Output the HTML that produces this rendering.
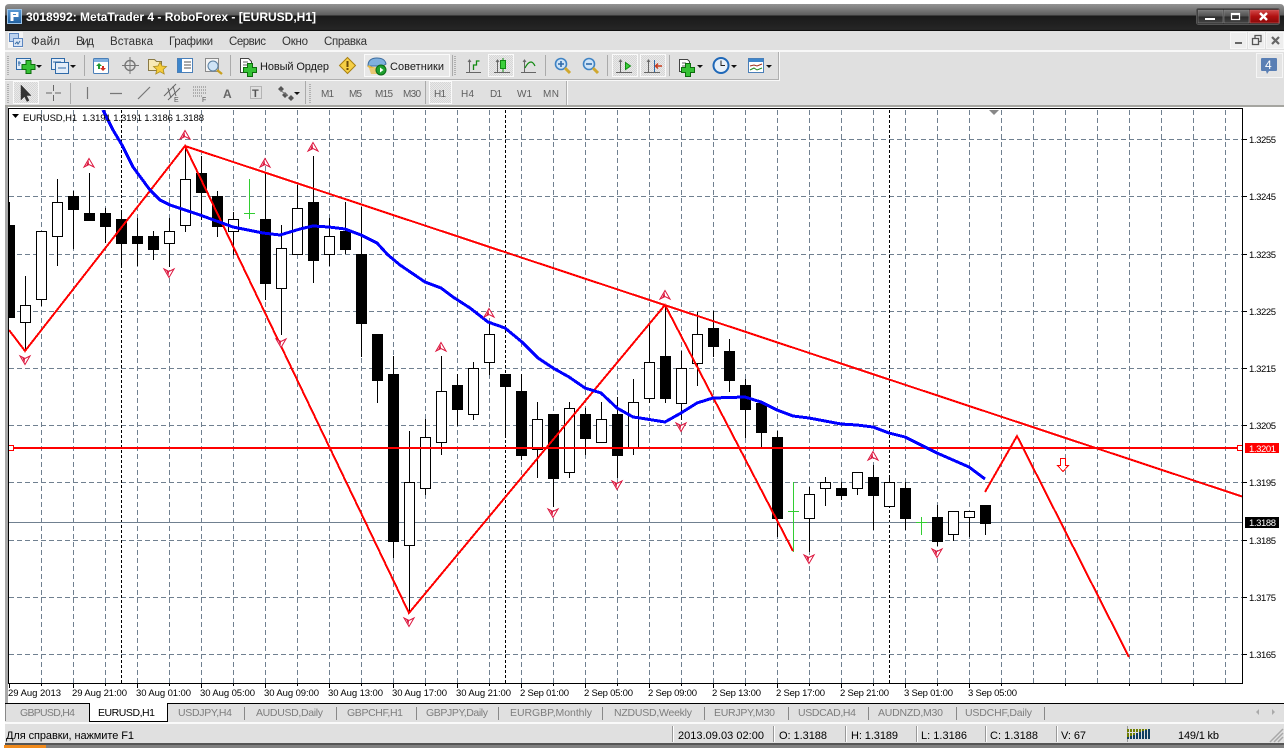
<!DOCTYPE html>
<html><head><meta charset="utf-8"><title>MetaTrader 4</title>
<style>
html,body{margin:0;padding:0;background:#fff;width:1288px;height:748px;overflow:hidden}
svg{display:block;position:absolute;left:0;top:0}
text{font-family:"Liberation Sans","DejaVu Sans",sans-serif;font-size:11px;fill:#1a1a1a;white-space:pre}
.c text,text.c{font-size:9.5px;fill:#000}
.m text{fill:#333;font-size:11.5px}
.t text{fill:#7d7d7d;font-size:10.5px}
.tf text{fill:#5e5e5e;font-size:10px}
</style></head><body>
<svg width="1288" height="748" viewBox="0 0 1288 748" xmlns="http://www.w3.org/2000/svg">
<defs>
<linearGradient id="tb" x1="0" y1="0" x2="0" y2="1"><stop offset="0" stop-color="#949494"/><stop offset=".42" stop-color="#5c5c5c"/><stop offset=".43" stop-color="#191919"/><stop offset=".95" stop-color="#262626"/><stop offset="1" stop-color="#000"/></linearGradient>
<linearGradient id="bt" x1="0" y1="0" x2="0" y2="1"><stop offset="0" stop-color="#7a7a7a"/><stop offset=".5" stop-color="#4e4e4e"/><stop offset=".51" stop-color="#2a2a2a"/><stop offset="1" stop-color="#444"/></linearGradient>
<linearGradient id="rd" x1="0" y1="0" x2="0" y2="1"><stop offset="0" stop-color="#d24a4a"/><stop offset=".5" stop-color="#b01010"/><stop offset="1" stop-color="#8a0a0a"/></linearGradient>
<linearGradient id="bl" x1="0" y1="0" x2="0" y2="1"><stop offset="0" stop-color="#5a9ad6"/><stop offset="1" stop-color="#1f5f9f"/></linearGradient>
<pattern id="chk" width="2" height="2" patternUnits="userSpaceOnUse"><rect width="2" height="2" fill="#e9e9e9"/><rect width="1" height="1" fill="#d6d6d6"/><rect x="1" y="1" width="1" height="1" fill="#d6d6d6"/></pattern>
<g id="plus"><path d="M-2.500-6.500h5v4h4v5h-4v4h-5v-4h-4v-5h4z" fill="#35c135" stroke="#0d6d0d"/></g>
<g id="au"><path d="M0-4.500 5 4 0 1.500-5 4z" fill="#fff" stroke="#dc143c"/><path d="M-.5-3-3 3 0 1z" fill="#dc143c"/></g>
<g id="ad"><path d="M0 4.500 5-4 0-1.500-5-4z" fill="#fff" stroke="#dc143c"/><path d="M-.5 3-3-3 0-1z" fill="#dc143c"/></g>
<g id="dd"><path d="M-3 0h6l-3 3z" fill="#111"/></g>
<clipPath id="cl"><rect x="9" y="110" width="1233" height="573"/></clipPath>
</defs>

<!-- window -->
<rect width="1288" height="748" fill="#fff"/>
<path d="M5 8q0-4 4-4H1280q4 0 4 4V31H5z" fill="url(#tb)"/>
<rect x="5" y="31" width="1279" height="74" fill="#e0e0e0"/>
<rect x="5" y="105" width="3" height="620" fill="#a8a8a8"/>
<rect x="5" y="105" width="1279" height="2" fill="#a5a5a0"/>
<rect x="5" y="743" width="1279" height="2" fill="#555"/>
<rect x="46" y="745" width="1238" height="3" fill="#808080"/>
<rect x="4" y="745" width="42" height="3" fill="#f08a1c"/>

<!-- title -->
<rect x="7.500" y="9.500" width="14" height="14" fill="url(#bl)" stroke="#9cc4e8"/>
<path d="M10.500 12h8v5h-5v4h-3zM13 14v1h3v-1z" fill="#fff" fill-rule="evenodd"/>
<text x="26" y="21" style="font-size:12px;font-weight:bold;fill:#fff" textLength="290">3018992: MetaTrader 4 - RoboForex - [EURUSD,H1]</text>
<rect x="1196.500" y="8.500" width="83" height="16" rx="2" fill="#222" stroke="#555"/>
<rect x="1198" y="10" width="25" height="13" fill="url(#bt)" stroke="#888" stroke-width=".6"/>
<rect x="1224" y="10" width="25" height="13" fill="url(#bt)" stroke="#888" stroke-width=".6"/>
<rect x="1250" y="10" width="29" height="13" fill="url(#rd)" stroke="#c66" stroke-width=".6"/>
<rect x="1205" y="18" width="10" height="2" fill="#fff"/>
<rect x="1231.500" y="13.500" width="8" height="6" fill="none" stroke="#fff" stroke-width="1.200"/><rect x="1231" y="13" width="9" height="2" fill="#fff"/>
<path d="M1260 13l7 7M1267 13l-7 7" stroke="#fff" stroke-width="2.400" fill="none"/>

<!-- menu -->
<rect x="8" y="32" width="15" height="16" fill="#f4f4f4"/>
<rect x="9.500" y="33.500" width="9" height="8" fill="#bcd2ef" stroke="#5c86c0"/><rect x="13.500" y="38.500" width="9" height="8" fill="#dbe6f5" stroke="#5c86c0"/><path d="M15 44l2-2 1 2 2-3" stroke="#3a6ea5" fill="none"/>
<g class="m">
<text x="31" y="45" textLength="29">Файл</text>
<text x="76" y="45" textLength="18">Вид</text>
<text x="110" y="45" textLength="43">Вставка</text>
<text x="169" y="45" textLength="44">Графики</text>
<text x="229" y="45" textLength="37">Сервис</text>
<text x="282" y="45" textLength="26">Окно</text>
<text x="324" y="45" textLength="43">Справка</text>
</g>
<path d="M5 51H1284" stroke="#fff" fill="none" stroke-width="1.600"/>
<rect x="1230.500" y="32.500" width="16" height="16" fill="#eee" stroke="#f7f7f7"/><rect x="1248.500" y="32.500" width="16" height="16" fill="#eee" stroke="#f7f7f7"/><rect x="1266.500" y="32.500" width="17" height="16" fill="#eee" stroke="#f7f7f7"/>
<rect x="1235" y="42" width="7" height="2" fill="#666"/>
<path d="M1252.500 38.500h6v6h-6zM1255 38v-2.500h6v6h-2" fill="none" stroke="#555" stroke-width="1.300"/>
<path d="M1272 37l7 7M1279 37l-7 7" stroke="#666" stroke-width="2.200" fill="none"/>

<!-- toolbar 1 -->
<path d="M778.500 52V79.500H5" fill="none" stroke="#b0b0b0"/><path d="M779.500 52V80.500H5" fill="none" stroke="#f8f8f8"/>
<path d="M8 56v19" stroke="#b0b0b0" stroke-dasharray="1 1" stroke-width="2" fill="none"/>
<path d="M84.500 55v21M230.500 55v21M452.500 55v21M545.500 55v21M607.500 55v21M669.500 55v21" stroke="#aaa" fill="none"/>
<path d="M455 56v19" stroke="#b0b0b0" stroke-dasharray="1 1" stroke-width="2" fill="none"/>
<g fill="none">
<rect x="364.500" y="54.500" width="85" height="22" fill="#e8e8e8" stroke="#fafafa"/>
<rect x="488.500" y="54.500" width="25" height="22" fill="url(#chk)" stroke="#fafafa"/>
<rect x="612.500" y="54.500" width="25" height="22" fill="url(#chk)" stroke="#fafafa"/>
<rect x="640.500" y="54.500" width="25" height="22" fill="url(#chk)" stroke="#fafafa"/>
</g>
<!-- new chart -->
<rect x="16.500" y="58.500" width="14" height="11" fill="#e4edf8" stroke="#2f6aa8"/><path d="M19 61v5M18 63h3M23 66h5" stroke="#2f6aa8" fill="none"/><use href="#plus" x="28.500" y="67"/>
<use href="#dd" x="39" y="65"/>
<!-- profiles -->
<rect x="51.500" y="58.500" width="13" height="11" fill="#e4edf8" stroke="#2f6aa8"/><rect x="55.500" y="62.500" width="13" height="11" fill="#e4edf8" stroke="#2f6aa8"/><path d="M53 62h8M58 68h8" stroke="#2f6aa8" fill="none"/>
<use href="#dd" x="73" y="65"/>
<!-- market watch -->
<rect x="93.500" y="58.500" width="15" height="15" rx="1" fill="#fff" stroke="#4a7fb8"/><rect x="94" y="59" width="14" height="3" fill="#7fb0e0"/><path d="M99 63l3 3h-2v3h-2v-3h-2z" fill="#1f9a2f"/><path d="M103 71l-3-3h2v-2h2v2h2z" fill="#d03020"/>
<!-- crosshair -->
<circle cx="130" cy="65.500" r="5" fill="none" stroke="#777" stroke-width="1.400"/><path d="M130 57v17M122 65.500h17" stroke="#777" fill="none"/>
<!-- folder star -->
<path d="M148.500 59.500h6l2 2h5v9h-13z" fill="#f7e9b5" stroke="#8a7a45"/><path d="M160 62l2 4 4.500.500-3.300 3 1 4.500-4.200-2.300-4.200 2.300 1-4.500-3.300-3 4.500-.500z" fill="#f5cc3a" stroke="#a98a20" stroke-width=".8"/>
<!-- list -->
<rect x="177.500" y="58.500" width="15" height="14" fill="#fff" stroke="#4a7fb8"/><rect x="178" y="59" width="4" height="13" fill="#3d86cc"/><path d="M184 62h7M184 65h7M184 68h7" stroke="#555" fill="none"/>
<!-- mag -->
<rect x="205.500" y="58.500" width="13" height="13" fill="#f4f4f4" stroke="#8a8a8a"/><circle cx="213" cy="66" r="5" fill="#cfe4f7" stroke="#5a7fa0"/><path d="M217 70l5 4" stroke="#c8a020" stroke-width="2.400" fill="none"/>
<!-- new order -->
<path d="M240.500 58.500h8l3 3v11h-11z" fill="#fff" stroke="#444"/><path d="M243 62h5M243 65h6M243 68h4" stroke="#666" fill="none"/><use href="#plus" x="250" y="70"/>
<text x="260" y="70" textLength="69">Новый Ордер</text>
<!-- warning -->
<path d="M347.500 57.500l8 8-8 8-8-8z" fill="#f6cf45" stroke="#a87f10"/><rect x="346.500" y="61" width="2" height="6" fill="#6a4a08"/><rect x="346.500" y="68" width="2" height="2" fill="#6a4a08"/>
<!-- hat -->
<path d="M368 66q0-8 9-8 8 0 9 6l-3 2z" fill="#7fb0de" stroke="#3e6d9e"/><path d="M368 66q8 5 17 0" fill="none" stroke="#e8b93f" stroke-width="2"/><path d="M369 68h9v6h-7z" fill="#e8c873"/><circle cx="381" cy="70" r="5" fill="#1fa02f" stroke="#0b6a15"/><path d="M380 67.500l3.500 2.500-3.500 2.500z" fill="#fff"/>
<text x="390" y="70" textLength="54">Советники</text>
<!-- chart types -->
<g fill="none" stroke="#666">
<path d="M469.500 60v13M466 72.500h15M468 62l1.500-2 1.500 2"/><path d="M473.500 70v-5h3v-4h3" stroke="#118a11" stroke-width="1.300"/>
<path d="M497.500 60v13M494 72.500h16M496 62l1.500-2 1.500 2"/><path d="M503 58v14" stroke="#118a11"/><rect x="500.500" y="60.500" width="5" height="8" fill="#3bd03b" stroke="#118a11"/>
<path d="M524.500 60v13M521 72.500h15M523 62l1.500-2 1.500 2"/><path d="M525 68q3-6 6-6 2 0 4 4" stroke="#118a11" stroke-width="1.200"/>
<path d="M620.500 60v13M616 72.500h16M619 62l1.500-2 1.500 2"/><path d="M625.500 62.500l5 3.500-5 3.500z" fill="#3bd03b" stroke="#118a11"/>
<path d="M648.500 60v13M644 72.500h16M647 62l1.500-2 1.500 2"/><path d="M654.500 60v12" stroke="#2f6aa8"/><path d="M662 66h-6M658 63.500l-2.500 2.500 2.500 2.500" stroke="#c83a1a" stroke-width="1.400"/>
</g>
<!-- zoom -->
<circle cx="561" cy="64" r="5.500" fill="#cfe4f7" stroke="#3f83c4" stroke-width="1.600"/><path d="M558 64h6M561 61v6" stroke="#2f6aa8" stroke-width="1.600"/><path d="M565 68l5 5" stroke="#d0a830" stroke-width="3"/>
<circle cx="589" cy="64" r="5.500" fill="#cfe4f7" stroke="#3f83c4" stroke-width="1.600"/><path d="M586 64h6" stroke="#2f6aa8" stroke-width="1.600"/><path d="M593 68l5 5" stroke="#d0a830" stroke-width="3"/>
<!-- add, clock, templates -->
<path d="M679.500 59.500h8l2 2v10h-10z" fill="#fff" stroke="#444"/><path d="M682 63h4M682 66h5M682 69h4" stroke="#666" fill="none"/><use href="#plus" x="688" y="70"/><use href="#dd" x="700" y="65"/>
<circle cx="721" cy="65.500" r="7.500" fill="#e8f0f8" stroke="#1f68b8" stroke-width="2"/><path d="M721 60.500v5h4" stroke="#222" fill="none"/><use href="#dd" x="734" y="65"/>
<rect x="748.500" y="58.500" width="15" height="14" fill="#fff" stroke="#4a7fb8"/><rect x="749" y="59" width="14" height="3" fill="#3d86cc"/><path d="M750 66l4-1 3 1 5-2" stroke="#a03020" fill="none"/><path d="M750 70l4-2 3 2 5-2" stroke="#208a20" fill="none"/><use href="#dd" x="769" y="65"/>
<!-- notif -->
<rect x="1256.500" y="53.500" width="26" height="24" fill="#e4e4e4" stroke="#f5f5f5"/>
<path d="M1261 59q0-1 1-1h14q1 0 1 1v11q0 1-1 1h-7l-2 3-1-3h-4q-1 0-1-1z" fill="#5a7fb4"/>
<text x="1265" y="69" style="font-size:12px;fill:#fff">4</text>

<!-- toolbar 2 -->
<path d="M566.500 81v24" stroke="#b0b0b0" fill="none"/><path d="M567.500 81v24" stroke="#fafafa" fill="none"/>
<path d="M8 84v19M310 84v19" stroke="#b0b0b0" stroke-dasharray="1 1" stroke-width="2" fill="none"/>
<path d="M70.500 83v21M305.500 81v23M425.500 81v23" stroke="#aaa" fill="none"/>
<rect x="13.500" y="81.500" width="25" height="22" fill="url(#chk)" stroke="#fafafa"/>
<rect x="429.500" y="81.500" width="22" height="22" fill="url(#chk)" stroke="#fafafa"/>
<path d="M21 85v15l3.500-3.500 2.500 5 2-1-2.500-5H31z" fill="#333" stroke="#333" stroke-width=".5"/>
<path d="M53.500 85v6M53.500 95v6M46 93h6M55 93h6" stroke="#666" fill="none"/>
<path d="M87.500 87v12M110 93.500h12M138 99l12-12" stroke="#777" fill="none" stroke-width="1.200"/>
<path d="M164 96l12-12M168 100l12-12M168 88l3 10M173 86l3 10" stroke="#666" fill="none"/><text x="174" y="102" style="font-size:7px;fill:#555">E</text>
<path d="M193 87h14M193 90h14M193 93h14M193 96h10" stroke="#777" stroke-dasharray="1 1" fill="none"/><text x="202" y="102" style="font-size:7px;fill:#555">F</text>
<text x="223" y="98" style="font-size:12px;font-weight:bold;fill:#666">A</text>
<rect x="250.500" y="86.500" width="11" height="12" fill="none" stroke="#888" stroke-dasharray="1 1"/><text x="252" y="97" style="font-size:11px;font-weight:bold;fill:#555">T</text>
<path d="M281 86l3 3-3 3-3-3zM285 92l3 3-3 3-3-3zM291 95l3 3-3 3-3-3z" fill="#555"/><path d="M280 90l8 6" stroke="#777" fill="none"/><use href="#dd" x="297" y="92"/>
<g class="tf">
<text x="321" y="97" textLength="13">M1</text>
<text x="349" y="97" textLength="13">M5</text>
<text x="375" y="97" textLength="18">M15</text>
<text x="403" y="97" textLength="18">M30</text>
<text x="434" y="97" textLength="12">H1</text>
<text x="461" y="97" textLength="13">H4</text>
<text x="490" y="97" textLength="12">D1</text>
<text x="517" y="97" textLength="15">W1</text>
<text x="543" y="97" textLength="16">MN</text>
</g>

<!-- chart -->
<rect x="8" y="108" width="1276" height="595" fill="#fff"/>
<g shape-rendering="crispEdges" fill="none">
<g clip-path="url(#cl)">
<path stroke="#708090" stroke-dasharray="5 3" d="M9 139.500H1242M9 196.500H1242M9 254.500H1242M9 311.500H1242M9 368.500H1242M9 425.500H1242M9 482.500H1242M9 540.500H1242M9 597.500H1242M9 654.500H1242"/>
<path stroke="#708090" stroke-dasharray="5 3" d="M41.500 110V683M73.500 110V683M105.500 110V683M137.500 110V683M169.500 110V683M201.500 110V683M233.500 110V683M265.500 110V683M297.500 110V683M329.500 110V683M361.500 110V683M393.500 110V683M425.500 110V683M457.500 110V683M489.500 110V683M521.500 110V683M553.500 110V683M585.500 110V683M617.500 110V683M649.500 110V683M681.500 110V683M713.500 110V683M745.500 110V683M777.500 110V683M809.500 110V683M841.500 110V683M873.500 110V683M905.500 110V683M937.500 110V683M969.500 110V683M1001.500 110V683M1033.500 110V683M1065.500 110V683M1097.500 110V683M1129.500 110V683M1161.500 110V683M1193.500 110V683M1225.500 110V683"/>
<path stroke="#000" stroke-dasharray="3 2" d="M121.500 110V683M505.500 110V683M889.500 110V683"/>
<path stroke="#708090" d="M9 522.500H1242"/>
<!-- wicks -->
<path stroke="#000" d="M9.500 202V317M25.500 276V350M41.500 231V306M57.500 179V266M73.500 191V249M89.500 173V220M105.500 208V243M121.500 212V268M137.500 218V266M153.500 231V260M169.500 218V267M185.500 145V232M201.500 156V220M217.500 191V237M233.500 212V255M265.500 173V300M281.500 225V335M297.500 185V254M313.500 156V283M329.500 218V266M345.500 202V254M361.500 207V357M377.500 334V403M393.500 356V558M409.500 431V612M425.500 419V495M441.500 356V455M457.500 374V426M473.500 362V420M489.500 322V375M505.500 374V438M521.500 374V460M537.500 402V478M553.500 414V507M569.500 402V478M585.500 408V455M601.500 402V442M617.500 397V478M633.500 379V455M649.500 323V403M665.500 305V403M681.500 351V420M697.500 312V386M713.500 311V357M729.500 339V392M745.500 379V438M761.500 403V448M777.500 431V537M809.500 487V552M825.500 477V506M841.500 482V500M857.500 472V495M873.500 465V530M889.500 477V507M905.500 482V530M937.500 505V546M953.500 511V541M969.500 511V537M985.500 505V535"/>
<!-- green dojis -->
<path stroke="#32cd32" d="M249.500 179V219M244 213.500H255M793.500 482V552M788 511.500H799M921.500 517V535M916 522.500H927"/>
<!-- white bodies -->
<path stroke="#000" fill="#fff" d="M20.500 305.500h10v17h-10zM36.500 231.500h10v68h-10zM52.500 202.500h10v34h-10zM164.500 231.500h10v12h-10zM180.500 179.500h10v46h-10zM228.500 219.500h10v12h-10zM276.500 248.500h10v40h-10zM292.500 208.500h10v46h-10zM324.500 236.500h10v18h-10zM404.500 482.500h10v63h-10zM420.500 437.500h10v51h-10zM436.500 391.500h10v51h-10zM468.500 368.500h10v46h-10zM484.500 334.500h10v28h-10zM532.500 419.500h10v30h-10zM564.500 408.500h10v64h-10zM596.500 419.500h10v23h-10zM628.500 402.500h10v46h-10zM644.500 362.500h10v36h-10zM676.500 368.500h10v35h-10zM692.500 334.500h10v29h-10zM804.500 494.500h10v24h-10zM820.500 482.500h10v6h-10zM852.500 472.500h10v16h-10zM884.500 482.500h10v24h-10zM948.500 511.500h10v23h-10zM964.500 511.500h10v6h-10z"/>
<!-- black bodies -->
<path stroke="#000" fill="#000" d="M9.500 225.500h5v92h-5zM68.500 196.500h10v13h-10zM84.500 213.500h10v7h-10zM100.500 213.500h10v13h-10zM116.500 219.500h10v24h-10zM132.500 236.500h10v7h-10zM148.500 236.500h10v13h-10zM196.500 173.500h10v19h-10zM212.500 196.500h10v30h-10zM260.500 219.500h10v64h-10zM308.500 202.500h10v58h-10zM340.500 231.500h10v18h-10zM356.500 254.500h10v69h-10zM372.500 334.500h10v46h-10zM388.500 374.500h10v167h-10zM452.500 385.500h10v24h-10zM500.500 374.500h10v12h-10zM516.500 391.500h10v64h-10zM548.500 414.500h10v64h-10zM580.500 414.500h10v24h-10zM612.500 414.500h10v41h-10zM660.500 356.500h10v42h-10zM708.500 328.500h10v18h-10zM724.500 351.500h10v29h-10zM740.500 385.500h10v24h-10zM756.500 403.500h10v29h-10zM772.500 437.500h10v81h-10zM836.500 488.500h10v7h-10zM868.500 477.500h10v18h-10zM900.500 488.500h10v30h-10zM932.500 517.500h10v24h-10zM980.500 505.500h10v18h-10z"/>
<!-- red -->
<path stroke="#f00" stroke-width="2" d="M9 330 25 351 185 146 409 613 665 305 793 551"/>
<path stroke="#f00" stroke-width="2" d="M185 146 1242 496.500"/>
<path stroke="#f00" stroke-width="2" d="M985 492 1017 436 1129 657"/>
<path stroke="#f00" stroke-width="2" d="M9 448H1242"/>
<path stroke="#00f" stroke-width="3" stroke-linejoin="round" d="M103 110 113 130 122 145 133 167 150 190 160 200 170 205 200 215 233 227 263 233 280 235 300 229 313 226 329 227 345 229 361 235 377 243 388 255 400 265 425 282 441 288 453 297 470 308 488 322 505 328 522 342 538 358 553 368 569 377 585 388 601 393 617 408 633 417 640 418 665 422 681 413 697 403 713 398 745 397 761 402 777 410 793 416 809 418 825 421 841 424 857 425 873 427 889 433 905 437 921 445 937 453 953 460 969 467 985 479"/>
<path stroke="#f00" fill="#fff" d="M1060.500 458.500h5v7h3l-5.500 6-5.500-6h3z"/>
</g>
<rect x="8.500" y="445.500" width="5" height="5" fill="#fff" stroke="#f00" stroke-width="1"/>
<rect x="1237.500" y="445.500" width="5" height="5" fill="#fff" stroke="#f00" stroke-width="1"/>
<!-- frame -->
<rect x="8.500" y="108.500" width="1234" height="575" stroke="#000"/>
<path stroke="#000" d="M1243 139.500h4M1243 196.500h4M1243 254.500h4M1243 311.500h4M1243 368.500h4M1243 425.500h4M1243 482.500h4M1243 540.500h4M1243 597.500h4M1243 654.500h4"/>
<path stroke="#000" d="M9.500 684v4M73.500 684v4M137.500 684v4M201.500 684v4M265.500 684v4M329.500 684v4M393.500 684v4M457.500 684v4M521.500 684v4M585.500 684v4M649.500 684v4M713.500 684v4M777.500 684v4M841.500 684v4M905.500 684v4M969.500 684v4"/>
<path stroke="#000" d="M41.500 684v2M105.500 684v2M169.500 684v2M233.500 684v2M297.500 684v2M361.500 684v2M425.500 684v2M489.500 684v2M553.500 684v2M617.500 684v2M681.500 684v2M745.500 684v2M809.500 684v2M873.500 684v2M937.500 684v2M1001.500 684v2M1065.500 684v2M1129.500 684v2M1193.500 684v2"/>
</g>
<path d="M989 110h10l-5 5z" fill="#888"/>
<path d="M12 114h7l-3.500 4z" fill="#000"/>
<text class="c" x="23" y="121" textLength="181">EURUSD,H1  1.3191 1.3191 1.3186 1.3188</text>
<g class="c">
<text x="1249" y="143" textLength="27">1.3255</text>
<text x="1249" y="200" textLength="27">1.3245</text>
<text x="1249" y="258" textLength="27">1.3235</text>
<text x="1249" y="315" textLength="27">1.3225</text>
<text x="1249" y="372" textLength="27">1.3215</text>
<text x="1249" y="429" textLength="27">1.3205</text>
<text x="1249" y="486" textLength="27">1.3195</text>
<text x="1249" y="544" textLength="27">1.3185</text>
<text x="1249" y="601" textLength="27">1.3175</text>
<text x="1249" y="658" textLength="27">1.3165</text>
<text x="8" y="696" textLength="53">29 Aug 2013</text>
<text x="72" y="696" textLength="55">29 Aug 21:00</text>
<text x="136" y="696" textLength="55">30 Aug 01:00</text>
<text x="200" y="696" textLength="55">30 Aug 05:00</text>
<text x="264" y="696" textLength="55">30 Aug 09:00</text>
<text x="328" y="696" textLength="55">30 Aug 13:00</text>
<text x="392" y="696" textLength="55">30 Aug 17:00</text>
<text x="456" y="696" textLength="55">30 Aug 21:00</text>
<text x="520" y="696" textLength="49">2 Sep 01:00</text>
<text x="584" y="696" textLength="49">2 Sep 05:00</text>
<text x="648" y="696" textLength="49">2 Sep 09:00</text>
<text x="712" y="696" textLength="49">2 Sep 13:00</text>
<text x="776" y="696" textLength="49">2 Sep 17:00</text>
<text x="840" y="696" textLength="49">2 Sep 21:00</text>
<text x="904" y="696" textLength="49">3 Sep 01:00</text>
<text x="968" y="696" textLength="49">3 Sep 05:00</text>
</g>
<rect x="1245" y="443" width="34" height="10" fill="#f00"/>
<text x="1249" y="452" textLength="27" style="font-size:9.5px;fill:#fff">1.3201</text>
<rect x="1245" y="517" width="34" height="11" fill="#000"/>
<text x="1249" y="526" textLength="27" style="font-size:9.5px;fill:#fff">1.3188</text>

<!-- fractal arrows -->
<use href="#au" x="89" y="163"/><use href="#au" x="185" y="135"/><use href="#au" x="265" y="163"/><use href="#au" x="313" y="147"/><use href="#au" x="441" y="347"/><use href="#au" x="489" y="313"/><use href="#au" x="665" y="295"/><use href="#au" x="873" y="456"/>
<use href="#ad" x="25" y="360"/><use href="#ad" x="169" y="273"/><use href="#ad" x="281" y="343"/><use href="#ad" x="409" y="622"/><use href="#ad" x="553" y="513"/><use href="#ad" x="617" y="485"/><use href="#ad" x="681" y="427"/><use href="#ad" x="809" y="559"/><use href="#ad" x="937" y="553"/>

<!-- tabs -->
<rect x="5" y="703" width="1279" height="20" fill="#e0e0e0"/>
<rect x="5" y="703" width="1279" height="1" fill="#000"/>
<rect x="5" y="704" width="1" height="17" fill="#888"/>
<path d="M89.500 704V721.500H167.500V704" fill="#fff" stroke="#000"/>
<rect x="90" y="703" width="77" height="2" fill="#fff"/>
<path d="M244.500 707v13M336.500 707v13M416.500 707v13M498.500 707v13M602.500 707v13M704.500 707v13M788.500 707v13M868.500 707v13M956.500 707v13M1044.500 707v13" stroke="#888" fill="none"/>
<g class="t">
<text x="20" y="716" textLength="55">GBPUSD,H4</text>
<text x="178" y="716" textLength="54">USDJPY,H4</text>
<text x="256" y="716" textLength="67">AUDUSD,Daily</text>
<text x="347" y="716" textLength="56">GBPCHF,H1</text>
<text x="426" y="716" textLength="62">GBPJPY,Daily</text>
<text x="510" y="716" textLength="82">EURGBP,Monthly</text>
<text x="614" y="716" textLength="78">NZDUSD,Weekly</text>
<text x="714" y="716" textLength="61">EURJPY,M30</text>
<text x="798" y="716" textLength="58">USDCAD,H4</text>
<text x="878" y="716" textLength="65">AUDNZD,M30</text>
<text x="965" y="716" textLength="67">USDCHF,Daily</text>
</g>
<text x="98" y="716" textLength="57" style="fill:#000;font-size:10.5px">EURUSD,H1</text>
<path d="M1259 709v6l-3-3zM1272 709v6l3-3z" fill="#aaa"/>

<!-- status -->
<rect x="5" y="722" width="1279" height="2" fill="#fafafa"/>
<rect x="5" y="724" width="1279" height="19" fill="#e0e0e0"/>
<path d="M672.500 726v16M773.500 726v16M845.500 726v16M916.500 726v16M985.500 726v16M1056.500 726v16M1127.500 726v16" stroke="#999" fill="none"/>
<path d="M673.500 726v16M774.500 726v16M846.500 726v16M917.500 726v16M986.500 726v16M1057.500 726v16" stroke="#fff" fill="none"/>
<text x="6" y="739" textLength="128" style="fill:#000">Для справки, нажмите F1</text>
<text x="678" y="739" textLength="86" style="fill:#000">2013.09.03 02:00</text>
<text x="779" y="739" textLength="48" style="fill:#000">O: 1.3188</text>
<text x="851" y="739" textLength="47" style="fill:#000">H: 1.3189</text>
<text x="921" y="739" textLength="46" style="fill:#000">L: 1.3186</text>
<text x="990" y="739" textLength="48" style="fill:#000">C: 1.3188</text>
<text x="1061" y="739" textLength="25" style="fill:#000">V: 67</text>
<path d="M1128 739V729M1131 739V729M1134 739V729M1137 739V729M1140 739V729M1143 739V729M1146 739V729M1149 739V729" stroke="#6f7f00" stroke-width="2" stroke-dasharray="6 1" fill="none"/>
<path d="M1128 739v-2M1131 739v-3M1134 739v-4M1137 739v-6M1140 739v-7M1143 739v-8M1146 739v-9M1149 739v-10" stroke="#103f60" stroke-width="2" fill="none"/>
<text x="1178" y="739" textLength="41" style="fill:#000">149/1 kb</text>
<path d="M1270 742l13-13M1274 742l9-9M1278 742l5-5" stroke="#a8a8a8" fill="none" stroke-width="1.500"/>
</svg>
</body></html>
